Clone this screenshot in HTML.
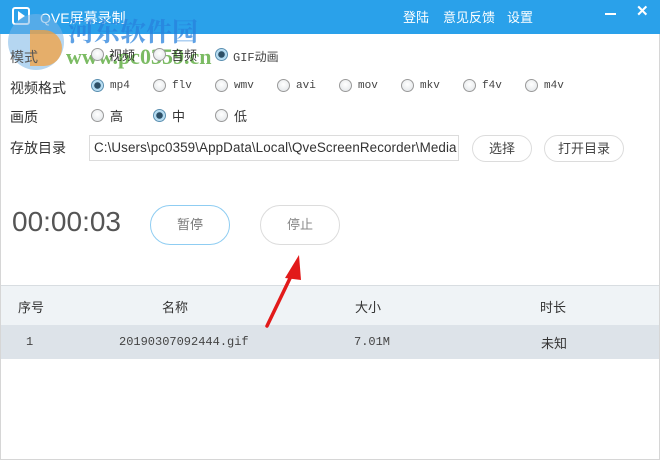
<!DOCTYPE html>
<html><head><meta charset="utf-8"><style>
*{margin:0;padding:0;box-sizing:border-box}
body{width:660px;height:460px;overflow:hidden;background:#fff;font-family:"Liberation Sans","Noto Sans CJK SC",sans-serif;position:relative;color:#333}
.win{position:absolute;left:0;top:0;width:660px;height:460px;border:1px solid #d6d6d6;border-top:none}
.title{position:absolute;left:0;top:0;width:660px;height:34px;background:#2aa1ea;color:#fff}
.abs{position:absolute}
.lbl{position:absolute;font-size:14px;color:#333}
.r{position:absolute;width:13px;height:13px;border-radius:50%;border:1px solid #9a9a9a;background:radial-gradient(circle at 50% 40%,#fff,#dfe3e6)}
.r.on{border-color:#5a8fb0;background:radial-gradient(circle,#2d4f66 0,#2d4f66 3px,#a9d6ef 3.5px,#cbe7f6 6px)}
.t{position:absolute;font-family:"Liberation Mono","Noto Sans CJK SC",monospace;font-size:11px;color:#444}
.tc{position:absolute;font-size:13px;color:#333}
.btn{position:absolute;border:1px solid #dcdcdc;border-radius:16px;font-size:13px;color:#444;text-align:center;background:#fff}
</style></head><body>
<div class="win"></div>
<div class="title">
 <div class="abs" style="left:12px;top:7px;width:18px;height:18px;border:2px solid #fff;border-radius:3px"></div>
 <div class="abs" style="left:18px;top:11px;width:0;height:0;border-left:7px solid #fff;border-top:5px solid transparent;border-bottom:5px solid transparent"></div>
 <div class="abs" style="left:40px;top:8px;font-size:14px">QVE屏幕录制</div>
 <div class="abs" style="left:403px;top:7px;font-size:13px">登陆</div>
 <div class="abs" style="left:443px;top:7px;font-size:13px">意见反馈</div>
 <div class="abs" style="left:507px;top:7px;font-size:13px">设置</div>
 <div class="abs" style="left:605px;top:13px;width:11px;height:2px;background:#fff"></div>
 <div class="abs" style="left:636px;top:2px;font-size:15px;font-weight:bold">✕</div>
</div>
<!-- watermark -->
<div class="abs" style="left:8px;top:14px;width:56px;height:56px;border-radius:50%;background:rgba(120,180,230,0.55)"></div>
<div class="abs" style="left:30px;top:30px;width:32px;height:36px;border-radius:0 30px 30px 0;background:rgba(245,160,60,0.75)"></div>
<div class="abs" style="left:68px;top:12px;font-size:26px;font-weight:bold;color:rgba(40,130,220,0.75);font-family:'Liberation Serif','Noto Serif CJK SC',serif">河东软件园</div>
<div class="abs" style="left:66px;top:44px;font-size:22px;font-weight:bold;color:rgba(90,170,60,0.8);font-family:'Liberation Serif',serif">www.pc0359.cn</div>

<div class="lbl" style="left:10px;top:47px;color:#555">模式</div>
<div class="r" style="left:91px;top:48px"></div><div class="tc" style="left:109px;top:45px">视频</div>
<div class="r" style="left:153px;top:48px"></div><div class="tc" style="left:171px;top:45px">音频</div>
<div class="r on" style="left:215px;top:48px"></div><div class="t" style="left:233px;top:48px;font-size:12px">GIF动画</div>

<div class="lbl" style="left:10px;top:78px">视频格式</div>
<div class="r on" style="left:91px;top:79px"></div><div class="t" style="left:110px;top:80px">mp4</div>
<div class="r" style="left:153px;top:79px"></div><div class="t" style="left:172px;top:80px">flv</div>
<div class="r" style="left:215px;top:79px"></div><div class="t" style="left:234px;top:80px">wmv</div>
<div class="r" style="left:277px;top:79px"></div><div class="t" style="left:296px;top:80px">avi</div>
<div class="r" style="left:339px;top:79px"></div><div class="t" style="left:358px;top:80px">mov</div>
<div class="r" style="left:401px;top:79px"></div><div class="t" style="left:420px;top:80px">mkv</div>
<div class="r" style="left:463px;top:79px"></div><div class="t" style="left:482px;top:80px">f4v</div>
<div class="r" style="left:525px;top:79px"></div><div class="t" style="left:544px;top:80px">m4v</div>

<div class="lbl" style="left:10px;top:107px">画质</div>
<div class="r" style="left:91px;top:109px"></div><div class="tc" style="left:110px;top:106px">高</div>
<div class="r on" style="left:153px;top:109px"></div><div class="tc" style="left:172px;top:106px">中</div>
<div class="r" style="left:215px;top:109px"></div><div class="tc" style="left:234px;top:106px">低</div>

<div class="lbl" style="left:10px;top:138px">存放目录</div>
<div class="abs" style="left:89px;top:135px;width:370px;height:26px;border:1px solid #dcdcdc;font-size:13.4px;line-height:24px;padding-left:4px;color:#333;white-space:nowrap;letter-spacing:0.1px">C:\Users\pc0359\AppData\Local\QveScreenRecorder\Media</div>
<div class="btn" style="left:472px;top:135px;width:60px;height:27px;line-height:25px">选择</div>
<div class="btn" style="left:544px;top:135px;width:80px;height:27px;line-height:25px">打开目录</div>

<div class="abs" style="left:12px;top:206px;font-size:28px;color:#555">00:00:03</div>
<div class="btn" style="left:150px;top:205px;width:80px;height:40px;line-height:38px;border-radius:20px;border-color:#8fcdf2;color:#777">暂停</div>
<div class="btn" style="left:260px;top:205px;width:80px;height:40px;line-height:38px;border-radius:20px;color:#888">停止</div>

<div class="abs" style="left:1px;top:285px;width:658px;height:40px;background:#eff3f6;border-top:1px solid #d8dde1"></div>
<div class="tc" style="left:18px;top:297px">序号</div>
<div class="tc" style="left:162px;top:297px">名称</div>
<div class="tc" style="left:355px;top:297px">大小</div>
<div class="tc" style="left:540px;top:297px">时长</div>
<div class="abs" style="left:1px;top:325px;width:658px;height:34px;background:#dde3e9"></div>
<div class="t" style="left:26px;top:335px;font-size:12px">1</div>
<div class="t" style="left:119px;top:335px;font-size:12px">20190307092444.gif</div>
<div class="t" style="left:354px;top:335px;font-size:12px">7.01M</div>
<div class="tc" style="left:541px;top:333px">未知</div>

<svg class="abs" style="left:255px;top:250px;z-index:5" width="60" height="85"><line x1="12" y1="76" x2="38" y2="22" stroke="#e21a1a" stroke-width="3.5" stroke-linecap="round"/><polygon points="44,5 30,28 46,30" fill="#e21a1a"/></svg>
</body></html>
